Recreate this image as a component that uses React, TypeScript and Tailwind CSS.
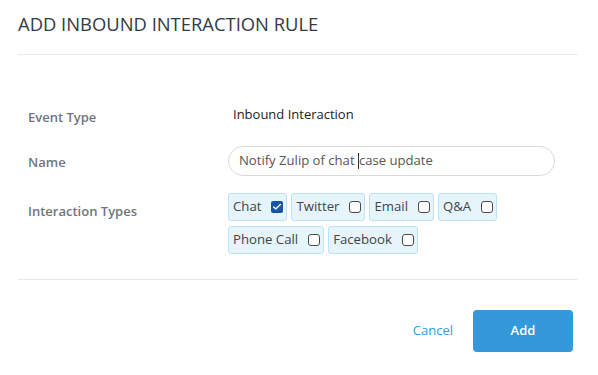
import { Check } from 'lucide-react'

const types = [
  { label: 'Chat', checked: true },
  { label: 'Twitter', checked: false },
  { label: 'Email', checked: false },
  { label: 'Q&A', checked: false },
  { label: 'Phone Call', checked: false },
  { label: 'Facebook', checked: false },
]

function Box({ checked }: { checked: boolean }) {
  if (checked) {
    return (
      <span className="flex h-[12px] w-[12px] items-center justify-center rounded-[2px] bg-[#1753a6]">
        <Check size={10} strokeWidth={3.5} className="text-white" />
      </span>
    )
  }
  return <span className="h-[12px] w-[12px] rounded-[3px] border border-[#4a4a4a] bg-white" />
}

export default function App() {
  return (
    <div
      className="h-[375px] w-[598px] bg-white pl-[18px] pr-[20px]"
      style={{ fontFamily: '"Open Sans", "Noto Sans", sans-serif' }}
    >
      <h1 className="pt-[11px] text-[18.4px] leading-[26px] font-medium text-[#333a44]">
        ADD INBOUND INTERACTION RULE
      </h1>
      <div className="mt-[17px] h-px bg-[#e8e8e8]" />

      <div className="flex flex-col gap-[15px] pt-[46px] pl-[10px]">
        {/* Event type */}
        <div className="flex h-[30px] items-center">
          <div className="w-[200px] pt-[3px] text-[13px] font-semibold text-[#6f7580]">Event Type</div>
          <div className="pl-[5px] pb-[2px] text-[13px] text-[#222]">Inbound Interaction</div>
        </div>

        {/* Name */}
        <div className="flex h-[30px] items-center">
          <div className="w-[200px] pt-[3px] text-[13px] font-semibold text-[#6f7580]">Name</div>
          <div className="flex h-[30px] w-[327px] items-center rounded-full border border-[#d9d9d9] pl-[10px] text-[13.1px] text-[#555]">
            <span className="whitespace-pre">Notify Zulip of chat </span>
            <span className="h-[16px] w-px bg-[#333]" />
            <span>case update</span>
          </div>
        </div>

        {/* Interaction types */}
        <div className="mt-[2px] flex items-start">
          <div className="w-[200px] pt-[4px] text-[13px] leading-[28px] font-semibold text-[#6f7580]">
            Interaction Types
          </div>
          <div className="flex w-[280px] flex-wrap gap-x-[4px] gap-y-[5px]">
            {types.map((t) => (
              <label
                key={t.label}
                className="flex h-[28px] items-center gap-[10px] rounded-[3px] border border-[#bde1f5] bg-[#e6f4fc] pl-[4px] pr-[3px] text-[13.2px] text-[#444]"
              >
                <span>{t.label}</span>
                <Box checked={t.checked} />
              </label>
            ))}
          </div>
        </div>
      </div>

      <div className="mt-[25px] h-px bg-[#e8e8e8]" />

      <div className="flex items-center justify-end gap-[20px] pt-[30px] pr-[5px]">
        <button className="text-[13px] text-[#2a9fd8]">Cancel</button>
        <button className="h-[42px] w-[100px] rounded-[4px] bg-[#3498db] text-[13px] font-semibold text-white">
          Add
        </button>
      </div>
    </div>
  )
}
